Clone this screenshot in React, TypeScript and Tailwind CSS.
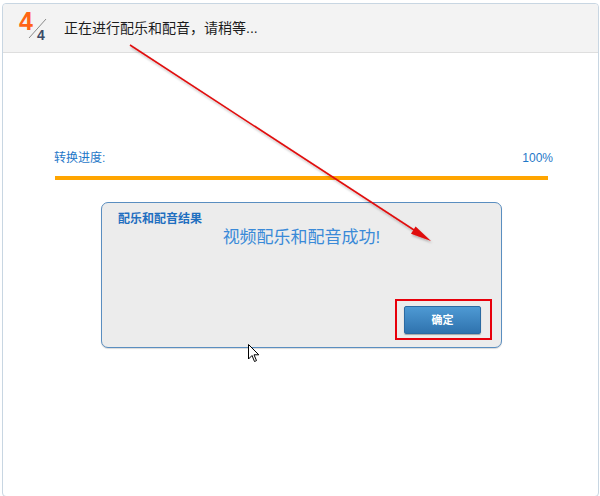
import React from 'react';

const cjk = { fontFamily: '"Liberation Sans", "Noto Sans CJK SC", sans-serif' };

const StepBadge: React.FC = () => (
  <div className="relative w-[61px] h-[48px] shrink-0">
    <span className="absolute left-[16px] top-[3px] text-[25px] leading-[28px] font-bold text-[#ff6414]">4</span>
    <svg className="absolute left-0 top-0" width="61" height="48">
      <line x1="26" y1="34" x2="43" y2="15" stroke="#8a8a8a" strokeWidth="1" />
    </svg>
    <span className="absolute left-[34px] top-[23px] text-[14px] leading-[16px] font-bold text-[#3d4b68]">4</span>
  </div>
);

const App: React.FC = () => {
  return (
    <div className="relative w-[600px] h-[496px] bg-white overflow-hidden" style={cjk}>
      <div className="ml-[2px] mt-[3px] w-[597px] h-[494px] border border-[#c8d6e2] rounded-[4px] flex flex-col">
        <div className="h-[49px] bg-[#f3f3f3] border-b border-[#dedede] flex items-center rounded-t-[4px]">
          <StepBadge />
          <span className="text-[14px] text-[#1c1c1c]">正在进行配乐和配音，请稍等...</span>
        </div>

        <div className="pl-[51px] pr-[45px] pt-[97px] flex flex-col">
          <div className="flex justify-between text-[12px] leading-[16px] text-[#1f78c8]">
            <span>转换进度:</span>
            <span>100%</span>
          </div>
          <div className="mt-[10px] ml-[1px] mr-[5px] h-[4px] bg-[#ffa500]" />

          <div className="mt-[22px] ml-[47px] w-[401px] h-[146px] bg-[#ececec] border border-[#5a8ec0] rounded-[7px] shadow-[0_1px_1px_rgba(0,0,0,0.15)] flex flex-col">
            <div className="pl-[16px] pt-[8px] text-[12px] leading-[16px] font-bold text-[#1f6fc0]">配乐和配音结果</div>
            <div className="text-center text-[17px] leading-[22px] text-[#3a8ad8]">视频配乐和配音成功!</div>
            <div className="mt-auto flex justify-end pr-[20px] pb-[13px]">
              <div className="relative">
                <button className="w-[77px] h-[28px] rounded-[2px] border border-[#2b6aa2] bg-gradient-to-b from-[#4e9ad4] to-[#2f73ae] text-white text-[11px] font-bold shadow-[0_1px_1px_rgba(0,0,0,0.3)]">
                  确定
                </button>
                <div className="absolute left-[-9px] right-[-11px] top-[-7px] bottom-[-6px] border-2 border-[#e8000b]" />
              </div>
            </div>
          </div>
        </div>
      </div>

      <svg className="absolute left-0 top-0 pointer-events-none" width="600" height="496">
        <defs>
          <filter id="sh" x="-10%" y="-10%" width="120%" height="120%">
            <feDropShadow dx="1" dy="2" stdDeviation="1" floodColor="#000" floodOpacity="0.25" />
          </filter>
        </defs>
        <g filter="url(#sh)">
          <line x1="130" y1="45" x2="414" y2="230" stroke="#e00a0a" strokeWidth="1.5" />
          <polygon points="431,241 411,233.8 415.6,226.6" fill="#e00a0a" />
        </g>
      </svg>

      <svg className="absolute left-[248px] top-[344px]" width="12" height="19" viewBox="0 0 12 19">
        <path d="M0.5 0.5 L0.5 15 L4 11.5 L6.5 17.5 L8.5 16.6 L6 10.8 L10.8 10.8 Z" fill="#fff" stroke="#000" strokeWidth="1" strokeLinejoin="miter" />
      </svg>
    </div>
  );
};

export default App;
